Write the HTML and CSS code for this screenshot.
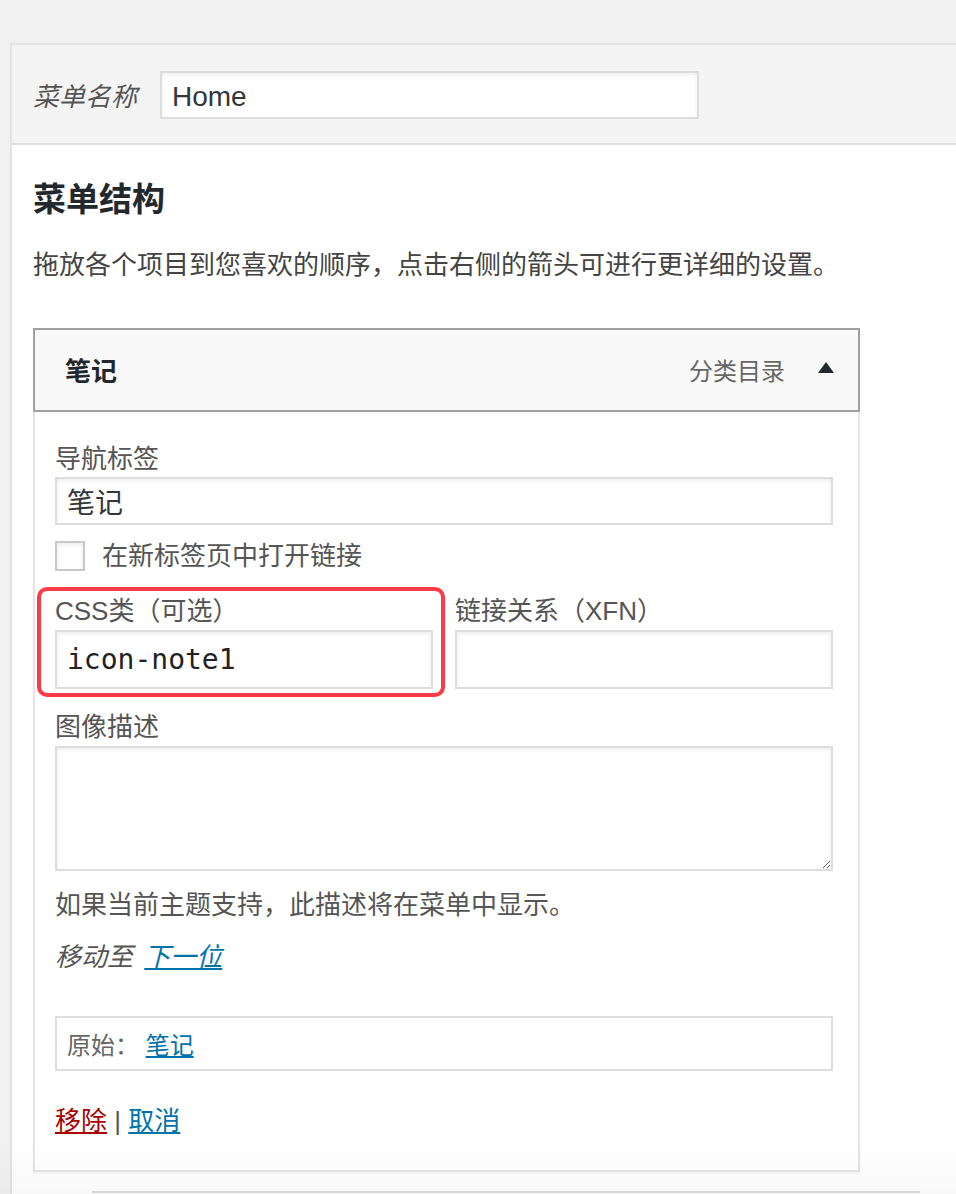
FILE: index.html
```html
<!DOCTYPE html>
<html lang="zh">
<head>
<meta charset="utf-8">
<title>菜单</title>
<link rel="stylesheet" href="styles.css">
</head>
<body>
<div class="page">
  <div class="panel">
    <div class="panel-header">
      <label class="menu-name-label">菜单名称</label>
      <input class="menu-name-input" type="text" value="Home">
    </div>
    <div class="panel-body">
      <h3 class="title">菜单结构</h3>
      <p class="desc">拖放各个项目到您喜欢的顺序，点击右侧的箭头可进行更详细的设置。</p>
      <div class="item">
        <div class="item-handle">
          <span class="item-title">笔记</span>
          <span class="item-type">分类目录</span>
          <svg class="item-arrow" width="16" height="11" viewBox="0 0 16 11"><polygon points="0,11 8,0 16,11"/></svg>
        </div>
        <div class="item-settings">
          <div class="field">
            <label class="field-label">导航标签</label>
            <input class="text-input" type="text" value="笔记">
          </div>
          <div class="check-row">
            <span class="checkbox"></span>
            <span class="check-label">在新标签页中打开链接</span>
          </div>
          <div class="two-col">
            <div class="field half">
              <label class="field-label">CSS类（可选）</label>
              <input class="text-input tall mono" type="text" value="icon-note1">
              <div class="highlight"></div>
            </div>
            <div class="field half">
              <label class="field-label">链接关系（XFN）</label>
              <input class="text-input tall" type="text" value="">
            </div>
          </div>
          <div class="field desc-field">
            <label class="field-label">图像描述</label>
            <textarea class="text-area"></textarea>
          </div>
          <p class="help">如果当前主题支持，此描述将在菜单中显示。</p>
          <p class="move"><span class="move-label">移动至</span> <a class="link move-link" href="#">下一位</a></p>
          <div class="original">原始： <a class="link" href="#">笔记</a></div>
          <div class="actions"><a class="remove" href="#">移除</a> <span class="sep">|</span> <a class="link" href="#">取消</a></div>
        </div>
      </div>
      <div class="footer-line"></div>
    </div>
  </div>
</div>
<div class="fade"></div>
</body>
</html>
```

FILE: styles.css
```css
html, body {
  margin: 0;
  height: 1194px;
  overflow: hidden;
}
body {
  background: #f1f1f1;
  font-family: "Liberation Sans", "Noto Sans CJK SC", sans-serif;
  color: #444;
}
.page {
  padding: 43px 0 0 10px;
}
.panel {
  margin-right: -30px;
  border: 2px solid #e3e3e3;
  border-right: none;
  background: #fff;
}
.panel-header {
  display: flex;
  align-items: center;
  padding: 26px 0 24px 21px;
  background: #f4f4f4;
  border-bottom: 2px solid #e0e0e0;
}
.menu-name-label {
  font-size: 26px;
  font-style: italic;
  color: #555;
  line-height: 36px;
  width: 104px;
  margin-right: 23px;
  margin-top: 3px;
}
.menu-name-input {
  box-sizing: border-box;
  width: 539px;
  height: 48px;
  margin: 0;
  padding: 4px 10px 0;
  border: 2px solid #dddddd;
  box-shadow: inset 0 2px 4px rgba(0,0,0,0.07);
  background: #fff;
  font-family: "Liberation Sans", sans-serif;
  font-size: 28px;
  color: #32373c;
  outline: none;
}
.panel-body {
  padding: 35px 0 0 21px;
}
.title {
  margin: 0;
  font-size: 33px;
  line-height: 40px;
  font-weight: bold;
  color: #23282d;
}
.desc {
  margin: 25px 0 43px;
  font-size: 26px;
  line-height: 40px;
  color: #444;
}
.item {
  width: 827px;
}
.item-handle {
  box-sizing: border-box;
  height: 84px;
  display: flex;
  align-items: center;
  padding: 0 24px 0 30px;
  background: #f9f9f9;
  border: 2px solid #a0a0a0;
}
.item-title {
  flex: 1;
  font-size: 26px;
  font-weight: bold;
  color: #23282d;
  margin-top: -2px;
}
.item-type {
  font-size: 24px;
  color: #666;
  margin-right: 33px;
  margin-top: -2px;
}
.item-arrow {
  fill: #23282d;
  margin-top: -6px;
}
.item-settings {
  padding: 29px 25px 31px 20px;
  border: 2px solid #e5e5e5;
  border-top: none;
  box-shadow: 0 2px 2px rgba(0,0,0,0.04);
  background: #fff;
}
.field {
  position: relative;
}
.field-label {
  display: block;
  font-size: 26px;
  line-height: 36px;
  color: #555;
}
.text-input {
  display: block;
  box-sizing: border-box;
  width: 100%;
  height: 48px;
  margin: 0;
  padding: 0 10px;
  border: 2px solid #dddddd;
  box-shadow: inset 0 2px 4px rgba(0,0,0,0.07);
  background: #fff;
  font-family: "Liberation Sans", "Noto Sans CJK SC", sans-serif;
  font-size: 28px;
  color: #32373c;
  outline: none;
}
.text-input.tall {
  height: 59px;
  margin-top: 1px;
}
.text-input.mono {
  font-family: "DejaVu Sans Mono", monospace;
  font-size: 28px;
  color: #222;
}
.check-row {
  display: flex;
  align-items: center;
  margin-top: 16px;
  height: 30px;
}
.checkbox {
  box-sizing: border-box;
  width: 30px;
  height: 30px;
  border: 2px solid #c8c8c8;
  box-shadow: inset 0 2px 4px rgba(0,0,0,0.08);
  background: #fff;
  margin-right: 17px;
}
.check-label {
  font-size: 26px;
  line-height: 36px;
  color: #555;
}
.two-col {
  display: grid;
  grid-template-columns: 378px 378px;
  column-gap: 22px;
  margin-top: 22px;
}
.highlight {
  position: absolute;
  top: -6px;
  left: -18px;
  right: -12px;
  bottom: -8px;
  border: 4px solid #ff3b47;
  border-radius: 10px;
  pointer-events: none;
}
.desc-field {
  margin-top: 20px;
}
.text-area {
  display: block;
  box-sizing: border-box;
  width: 100%;
  height: 125px;
  margin: 1px 0 0;
  padding: 6px 10px;
  border: 2px solid #dddddd;
  box-shadow: inset 0 2px 4px rgba(0,0,0,0.07);
  background: #fff;
  font-size: 28px;
  resize: vertical;
  outline: none;
}
.help {
  margin: 16px 0 0;
  font-size: 26px;
  line-height: 36px;
  color: #555;
}
.move {
  margin: 16px 0 0;
  font-size: 26px;
  line-height: 36px;
  color: #555;
}
.move-label {
  font-style: italic;
  margin-right: 4px;
}
.move-link {
  font-style: italic;
}
.link {
  color: #0073aa;
  text-decoration: underline;
}
.original {
  box-sizing: border-box;
  height: 55px;
  margin-top: 41px;
  padding: 0 10px;
  display: flex;
  align-items: center;
  border: 2px solid #dddddd;
  font-size: 24px;
  color: #666;
  white-space: pre;
}
.actions {
  margin-top: 32px;
  font-size: 26px;
  line-height: 36px;
  color: #555;
}
.remove {
  color: #a00;
  text-decoration: underline;
}
.sep {
  color: #555;
}
.footer-line {
  margin: 19px 0 0 59px;
  width: 828px;
  border-top: 2px solid #dddddd;
  height: 40px;
}
.fade {
  position: fixed;
  left: 0;
  right: 0;
  bottom: 0;
  height: 54px;
  background: linear-gradient(to bottom, rgba(0,0,0,0), rgba(0,0,0,0.025));
  pointer-events: none;
}
```
